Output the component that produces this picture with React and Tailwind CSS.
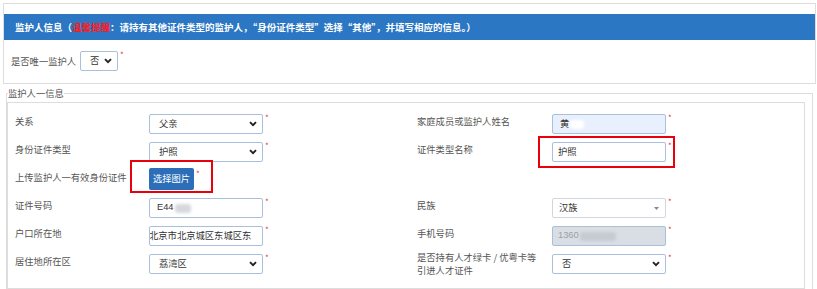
import React from "react";

const FONT = { fontFamily: '"Noto Sans CJK SC", "Noto Sans", sans-serif' };

function Chevron() {
  return (
    <svg width="8" height="6" viewBox="0 0 8 6" className="shrink-0">
      <path d="M1 1.2 L4 4.2 L7 1.2" fill="none" stroke="#222" strokeWidth="1.9" />
    </svg>
  );
}

function Star() {
  return <span className="ml-[2px] self-start text-[8px] leading-[8px] text-[#e4393c]">*</span>;
}

function Select({ value, w = "w-[114px]" }) {
  return (
    <div className={`flex h-[20px] ${w} items-center justify-between rounded-[2px] border border-[#a9bfdc] bg-white pl-[9px] pr-[5px] text-[9.3px] text-[#333]`}>
      <span>{value}</span>
      <Chevron />
    </div>
  );
}

function Label({ children, className = "" }) {
  return (
    <div className={`w-[134px] shrink-0 pt-[1px] text-[9.3px] leading-[13px] text-[#555] ${className}`}>{children}</div>
  );
}

function Row({ children }) {
  return <div className="flex h-[28px] items-start">{children}</div>;
}

function Blur({ w, color = "#cfd3d8" }) {
  return <span className={`ml-[1px] inline-block h-[9px] ${w} rounded-[3px] blur-[1.5px]`} style={{ background: color }} />;
}

export default function App() {
  return (
    <div lang="zh-CN" className="relative h-[289px] w-[817px] overflow-hidden bg-white" style={FONT}>
      {/* Panel 1 */}
      <div className="pl-[3px] pr-[1px] pt-[3px]">
        <div className="h-[81px] border border-[#dddddd] pt-[10px]">
          <div className="flex h-[26px] items-center bg-[#2b77c3] pl-[11px] text-[9.5px] font-bold text-white">
            监护人信息（<span className="text-[#ff1a1a]">温馨提醒</span>：请持有其他证件类型的监护人，“身份证件类型”选择“其他”，并填写相应的信息。）
          </div>
          <div className="mt-[11px] flex items-start pl-[7px]">
            <span className="mr-[4px] pt-[4px] text-[9.3px] leading-[13px] text-[#555]">是否唯一监护人</span>
            <Select value="否" w="w-[38px]" />
            <Star />
          </div>
        </div>
      </div>

      {/* Fieldset */}
      <fieldset className="ml-[6px] mt-[3px] w-[807px] border border-b-0 border-[#dddddd]">
        <legend className="ml-[1px] text-[9.3px] leading-[12px] text-[#555]">监护人一信息</legend>
        <div className="mr-[7px] mt-[3px] h-[187px] border border-[#dddddd] pl-[7px] pt-[11px]">
          <div className="grid grid-cols-[402px_1fr]">
            {/* left column */}
            <div className="flex flex-col">
              <Row>
                <Label>关系</Label>
                <Select value="父亲" />
                <Star />
              </Row>
              <Row>
                <Label>身份证件类型</Label>
                <Select value="护照" />
                <Star />
              </Row>
              <Row>
                <Label>上传监护人一有效身份证件</Label>
                <div className="-mt-[2px] flex h-[22px] w-[45px] items-center justify-center rounded-[2px] bg-[#2c6fb8] text-[9.3px] text-white">
                  选择图片
                </div>
                <Star />
              </Row>
              <Row>
                <Label>证件号码</Label>
                <div className="flex h-[20px] w-[114px] items-center rounded-[2px] border border-[#a9bfdc] bg-white pl-[7px] text-[9.3px] text-[#333]">
                  <span style={{ fontFamily: '"Liberation Sans", sans-serif' }}>E44</span>
                  <Blur w="w-[16px]" color="#d6d8dc" />
                </div>
                <Star />
              </Row>
              <Row>
                <Label>户口所在地</Label>
                <div className="flex h-[20px] w-[114px] items-center overflow-hidden whitespace-nowrap rounded-[2px] border border-[#a9bfdc] bg-white text-[9.3px] text-[#333]">
                  <span className="-ml-[1px]">北京市北京城区东城区东</span>
                </div>
                <Star />
              </Row>
              <Row>
                <Label>居住地所在区</Label>
                <Select value="荔湾区" />
                <Star />
              </Row>
            </div>
            {/* right column */}
            <div className="flex flex-col">
              <Row>
                <Label className="w-[135px]">家庭成员或监护人姓名</Label>
                <div className="flex h-[20px] w-[114px] items-center rounded-[2px] border border-[#a9bfdc] bg-[#e8f0fe] pl-[7px] text-[9.3px] text-[#333]">
                  <span>黄</span>
                  <Blur w="w-[14px]" color="#ffffff" />
                </div>
                <Star />
              </Row>
              <Row>
                <Label className="w-[135px]">证件类型名称</Label>
                <div className="flex h-[20px] w-[114px] items-center rounded-[2px] border border-[#a9bfdc] bg-white pl-[5px] text-[9.3px] text-[#333]">
                  护照
                </div>
                <Star />
              </Row>
              <Row>
                <div />
              </Row>
              <Row>
                <Label className="w-[135px]">民族</Label>
                <div className="flex h-[20px] w-[114px] items-center justify-between rounded-[2px] border border-[#cfd6df] bg-white pl-[6px] pr-[6px] text-[9.3px] text-[#333]">
                  <span>汉族</span>
                  <svg width="5" height="3" viewBox="0 0 5 3">
                    <path d="M0 0 L5 0 L2.5 3 Z" fill="#888" />
                  </svg>
                </div>
                <Star />
              </Row>
              <Row>
                <Label className="w-[135px]">手机号码</Label>
                <div className="flex h-[20px] w-[114px] items-center rounded-[2px] border border-[#a9bfdc] bg-[#d9dee4] pl-[5px] text-[9.3px] text-[#9aa0a6]">
                  <span style={{ fontFamily: '"Liberation Sans", sans-serif' }}>1360</span>
                  <Blur w="w-[36px]" color="#c6cbd2" />
                </div>
                <Star />
              </Row>
              <Row>
                <Label className="-mt-[4px] w-[135px] leading-[12px]">
                  是否持有人才绿卡 / 优粤卡等
                  <br />
                  引进人才证件
                </Label>
                <Select value="否" />
                <Star />
              </Row>
            </div>
          </div>
        </div>
      </fieldset>

      {/* red annotation boxes */}
      <div className="absolute left-[130px] top-[160px] h-[33px] w-[83px] border-2 border-[#e8000b]" />
      <div className="absolute left-[538px] top-[136px] h-[32px] w-[137px] border-2 border-[#e8000b]" />
    </div>
  );
}
